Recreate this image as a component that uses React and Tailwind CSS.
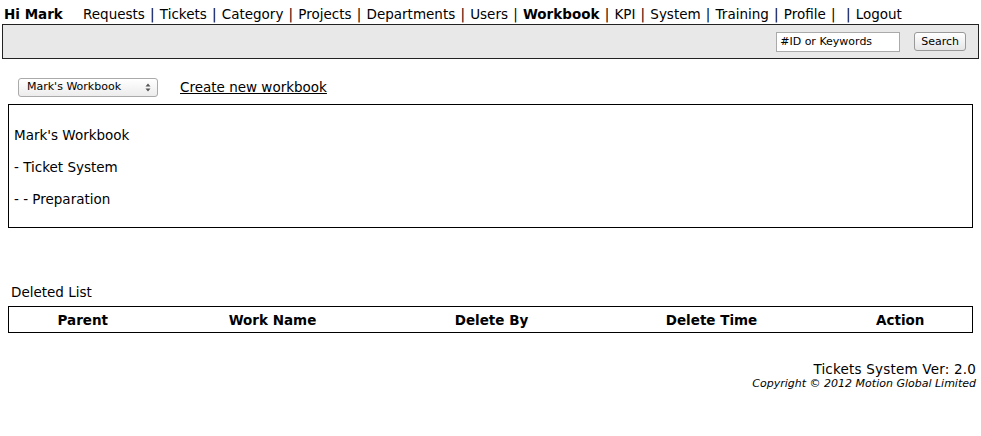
import React from 'react';

const links = ['Requests', 'Tickets', 'Category', 'Projects', 'Departments', 'Users', 'Workbook', 'KPI', 'System', 'Training', 'Profile', '', 'Logout'];

export default function App() {
  return (
    <div className="w-[981px] h-[436px] bg-white text-black text-[13.5px] font-['Verdana','DejaVu_Sans',sans-serif] overflow-hidden">
      {/* top nav */}
      <div className="flex items-center h-[24px] pl-[4px] pt-[4px]">
        <span className="font-bold w-[79px]">Hi Mark</span>
        <div className="flex items-center">
          {links.map((l, i) => (
            <span key={i} className="flex items-center">
              {i > 0 && <span className="mx-[5.2px]">|</span>}
              <span className={l === 'Workbook' ? 'font-bold' : ''}>{l}</span>
            </span>
          ))}
        </div>
      </div>

      {/* search bar */}
      <div className="mx-[2px] h-[35px] border border-[#222] bg-[#e8e8e8] flex items-center justify-end pr-[12px]">
        <input
          defaultValue="#ID or Keywords"
          className="w-[124px] h-[20px] bg-white border border-[#aaa] text-[11px] px-[3px] outline-none"
        />
        <button className="ml-[14px] h-[19px] px-[6px] rounded-[3px] border border-[#999] bg-gradient-to-b from-white to-[#e6e6e6] text-[11px] leading-none">
          Search
        </button>
      </div>

      {/* workbook selector */}
      <div className="flex items-center mt-[18px] pl-[18px]">
        <div className="w-[140px] h-[19px] rounded-[3px] border border-[#aaa] bg-gradient-to-b from-white to-[#ececec] flex items-center justify-between pl-[8px] pr-[6px] text-[11px]">
          <span>Mark's Workbook</span>
          <svg width="6" height="9" viewBox="0 0 6 9" className="text-[#555]">
            <path d="M3 0.5 L5.5 3.5 H0.5 Z M3 8.5 L5.5 5.5 H0.5 Z" fill="currentColor" />
          </svg>
        </div>
        <a href="#" className="ml-[22px] underline">Create new workbook</a>
      </div>

      {/* tree box */}
      <div className="mx-[8px] mt-[7px] h-[124px] w-[965px] border border-black px-[5px] pt-[22px] flex flex-col gap-[16px] leading-[16px]">
        <div>Mark's Workbook</div>
        <div>- Ticket System</div>
        <div>- - Preparation</div>
      </div>

      {/* deleted list */}
      <div className="mt-[56px] pl-[11px] leading-[16px]">Deleted List</div>
      <table className="ml-[8px] mt-[6px] w-[965px] border border-black border-collapse">
        <thead>
          <tr className="h-[26px] font-bold">
            <th className="w-[148px] text-center">Parent</th>
            <th className="w-[232px] text-center">Work Name</th>
            <th className="w-[206px] text-center">Delete By</th>
            <th className="w-[234px] text-center">Delete Time</th>
            <th className="text-center">Action</th>
          </tr>
        </thead>
      </table>

      {/* footer */}
      <div className="mt-[28px] pr-[5px] flex flex-col items-end">
        <div className="leading-[16px] tracking-[0.2px]">Tickets System Ver: 2.0</div>
        <div className="italic text-[11px] leading-[14px]">Copyright © 2012 Motion Global Limited</div>
      </div>
    </div>
  );
}
